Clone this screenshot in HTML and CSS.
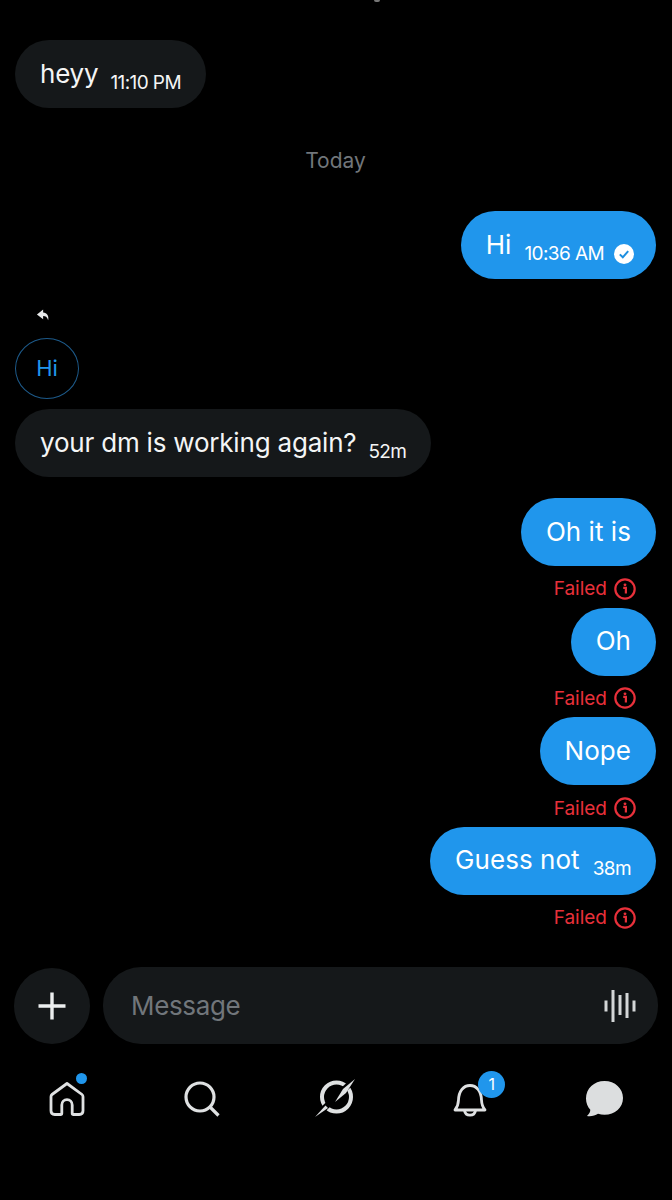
FILE: index.html
```html
<!DOCTYPE html>
<html lang="en">

<head>
  <meta charset="UTF-8" />
  <title>Messages</title>
  <link rel="stylesheet" href="styles.css">
</head>

<body>
  <div class="screen">
    <div class="clipped-top"></div>

    <main class="thread">
      <div class="bubble received first">
        <span class="text">heyy</span>
        <span class="time">11:10 PM</span>
      </div>

      <div class="day">Today</div>

      <div class="bubble sent">
        <span class="text">Hi</span>
        <span class="time">10:36 AM</span>
        <svg class="check" viewBox="0 0 20 20">
          <circle cx="10" cy="10" r="10" fill="#fff" />
          <path d="M5.800 10.400l3 2.900 5.400-6.200" fill="none" stroke="#1d8fe0" stroke-width="2" />
        </svg>
      </div>

      <div class="reply-block">
        <svg class="reply-icon" viewBox="0 0 16 16">
          <path d="M7.600 1.500L1 7l6.600 5V8.600c2.600 0 4.300 1 5.400 4.400.9-4.600-1-8-5.400-8.300z" fill="#e7e9ea" />
        </svg>
        <div class="quoted">Hi</div>
      </div>

      <div class="bubble received">
        <span class="text">your dm is working again?</span>
        <span class="time">52m</span>
      </div>

      <div class="bubble sent gap-lg">
        <span class="text">Oh it is</span>
      </div>
      <div class="failed">Failed
        <svg class="info" viewBox="0 0 20 20">
          <circle cx="10" cy="10" r="8.800" fill="none" stroke="#e8303a" stroke-width="2" />
          <circle cx="10" cy="6.200" r="1.300" fill="#e8303a" />
          <path d="M8.400 9h2.400v5.200" fill="none" stroke="#e8303a" stroke-width="2" />
        </svg>
      </div>

      <div class="bubble sent">
        <span class="text">Oh</span>
      </div>
      <div class="failed">Failed
        <svg class="info" viewBox="0 0 20 20">
          <circle cx="10" cy="10" r="8.800" fill="none" stroke="#e8303a" stroke-width="2" />
          <circle cx="10" cy="6.200" r="1.300" fill="#e8303a" />
          <path d="M8.400 9h2.400v5.200" fill="none" stroke="#e8303a" stroke-width="2" />
        </svg>
      </div>

      <div class="bubble sent">
        <span class="text">Nope</span>
      </div>
      <div class="failed">Failed
        <svg class="info" viewBox="0 0 20 20">
          <circle cx="10" cy="10" r="8.800" fill="none" stroke="#e8303a" stroke-width="2" />
          <circle cx="10" cy="6.200" r="1.300" fill="#e8303a" />
          <path d="M8.400 9h2.400v5.200" fill="none" stroke="#e8303a" stroke-width="2" />
        </svg>
      </div>

      <div class="bubble sent">
        <span class="text">Guess not</span>
        <span class="time">38m</span>
      </div>
      <div class="failed">Failed
        <svg class="info" viewBox="0 0 20 20">
          <circle cx="10" cy="10" r="8.800" fill="none" stroke="#e8303a" stroke-width="2" />
          <circle cx="10" cy="6.200" r="1.300" fill="#e8303a" />
          <path d="M8.400 9h2.400v5.200" fill="none" stroke="#e8303a" stroke-width="2" />
        </svg>
      </div>
    </main>

    <div class="composer">
      <div class="add-btn">
        <svg viewBox="0 0 30 30">
          <path d="M15 1.500v27M1.500 15h27" stroke="#eceeef" stroke-width="3.400" />
        </svg>
      </div>
      <div class="message-box">
        <span class="placeholder">Message</span>
        <svg class="voice" viewBox="0 0 32 32">
          <path d="M2 10.500v11M9 0v32M16 5v20M23 3v25M30 10.500v11" stroke="#d4d6d7" stroke-width="3" />
        </svg>
      </div>
    </div>

    <nav class="tabs">
      <div class="tab">
        <svg class="tab-icon" viewBox="0 0 36 36">
          <path d="M18 2.500L3 13.500c-.8.600-1 1.300-1 2.300v14c0 2.300 1.400 3.700 3.700 3.700h5.800c.8 0 1.300-.5 1.300-1.300V24c0-3 2.200-5.300 5.200-5.300s5.200 2.300 5.200 5.300v8.200c0 .8.500 1.300 1.300 1.300h5.800c2.300 0 3.700-1.400 3.700-3.700v-14c0-1-.2-1.700-1-2.300z" fill="none" stroke="#dfe1e2" stroke-width="2.800" stroke-linejoin="round" />
        </svg>
        <span class="home-dot"></span>
      </div>
      <div class="tab">
        <svg class="tab-icon" viewBox="0 0 36 36">
          <circle cx="16" cy="16" r="14" fill="none" stroke="#dfe1e2" stroke-width="3.200" />
          <path d="M26 26l8.500 8.500" stroke="#dfe1e2" stroke-width="3.200" />
        </svg>
      </div>
      <div class="tab">
        <svg class="tab-icon wide" viewBox="0 0 44 44">
          <circle cx="22.500" cy="21" r="14.500" fill="none" stroke="#dfe1e2" stroke-width="4" />
          <path d="M1 41L41 3" stroke="#000" stroke-width="6" />
          <path d="M41 3L32 17 21 26 29 13z" fill="#dfe1e2" />
          <path d="M1 41L11.500 29.500 14 32z" fill="#dfe1e2" />
        </svg>
      </div>
      <div class="tab">
        <svg class="tab-icon" viewBox="0 0 36 36">
          <path d="M3 29c2.500-3 3.300-5.500 3.500-10 .3-9 5-14.500 11.500-14.500S29.200 10 29.500 19c.2 4.500 1 7 3.500 10z" fill="none" stroke="#dfe1e2" stroke-width="2.800" stroke-linejoin="round" />
          <path d="M12.500 29.500c.5 3 2.700 4.700 5.500 4.700s5-1.700 5.500-4.700" fill="none" stroke="#dfe1e2" stroke-width="2.800" />
        </svg>
        <span class="badge">1</span>
      </div>
      <div class="tab">
        <svg class="tab-icon chat" viewBox="0 0 38 36">
          <path d="M19.500 0C9 0 1 7.500 1 17.500c0 4.500 1.700 8.300 4.300 11.300 0 2-.8 4-3.300 6.200 4 .6 8-.2 11-2.300 2 .7 4.300 1.100 6.500 1.100C30 33.800 38 26.500 38 17 38 7.500 30 0 19.500 0z" fill="#dcdedf" />
        </svg>
      </div>
    </nav>
  </div>
</body>

</html>
```

FILE: styles.css
```css
* {
  box-sizing: border-box;
}

body {
  margin: 0;
  background-color: #000;
  font-family: 'Inter', 'Liberation Sans', sans-serif;
  color: #e7e9ea;
}

.screen {
  width: 672px;
  height: 1200px;
  overflow: hidden;
  display: flex;
  flex-direction: column;
}

.clipped-top {
  width: 6px;
  height: 2px;
  margin-left: 374px;
  border-radius: 0 0 3px 3px;
  background-color: #777;
}

.thread {
  display: flex;
  flex-direction: column;
  align-items: flex-start;
  padding: 38px 16px 0 15px;
  height: 963px;
}

.bubble {
  display: flex;
  align-items: center;
  height: 68px;
  padding: 0 25px;
  border-radius: 34px;
  font-size: 26px;
  letter-spacing: -0.2px;
}

.bubble .text {
  position: relative;
  top: -1px;
}

.bubble .time {
  margin-left: 12px;
  position: relative;
  top: 8px;
  font-size: 19px;
  letter-spacing: -0.6px;
}

.received {
  background-color: #15181a;
  color: #f4f5f5;
}

.sent {
  align-self: flex-end;
  background-color: #2096ec;
  color: #fff;
  letter-spacing: 0.05px;
}

.sent .time {
  margin-left: 13px;
}

.gap-lg {
  margin-top: 21px;
}

.day {
  align-self: center;
  margin: 40px 0 37px;
  font-size: 21px;
  line-height: 26px;
  color: #71767b;
}

.check {
  width: 20px;
  height: 20px;
  margin-left: 10px;
  margin-right: -3px;
  position: relative;
  top: 9px;
}

.reply-block {
  margin-top: 29px;
  margin-bottom: 10px;
}

.reply-icon {
  display: block;
  width: 15px;
  height: 15px;
  margin-left: 21px;
  margin-bottom: 15px;
}

.quoted {
  display: flex;
  align-items: center;
  justify-content: center;
  width: 64px;
  height: 61px;
  padding-bottom: 1px;
  border: 1px solid #1d5a8a;
  border-radius: 50%;
  color: #2096ec;
  font-size: 22px;
}

.failed {
  align-self: flex-end;
  display: flex;
  align-items: center;
  height: 41.670px;
  padding-top: 4px;
  padding-right: 20px;
  gap: 7px;
  font-size: 19px;
  color: #e8303a;
}

.info {
  width: 22px;
  height: 22px;
}

.composer {
  display: flex;
  align-items: center;
  gap: 13px;
  padding: 2px 14px 0;
}

.add-btn {
  display: flex;
  align-items: center;
  justify-content: center;
  flex: 0 0 76px;
  height: 76px;
  border-radius: 50%;
  background-color: #15181a;
}

.add-btn svg {
  width: 30px;
  height: 30px;
}

.message-box {
  flex: 1;
  display: flex;
  align-items: center;
  justify-content: space-between;
  height: 77px;
  padding: 0 22px 0 28px;
  border-radius: 38px;
  background-color: #15181a;
}

.placeholder {
  font-size: 26px;
  letter-spacing: -0.35px;
  color: #71767b;
}

.voice {
  width: 32px;
  height: 32px;
}

.tabs {
  display: flex;
  justify-content: space-between;
  padding: 37px 0 0;
}

.tab {
  position: relative;
  display: flex;
  justify-content: center;
  width: 134.400px;
}

.tab-icon {
  width: 36px;
  height: 36px;
}

.tab-icon.wide {
  width: 44px;
  height: 44px;
  margin-top: -5px;
}

.tab-icon.chat {
  width: 38px;
  margin-left: -2px;
}

.home-dot {
  position: absolute;
  top: -8px;
  left: 76px;
  width: 11px;
  height: 11px;
  border-radius: 50%;
  background-color: #2096ec;
}

.badge {
  position: absolute;
  top: -10px;
  left: 75px;
  width: 27px;
  height: 27px;
  border-radius: 50%;
  background-color: #2096ec;
  color: #fff;
  font-size: 16px;
  line-height: 27px;
  text-align: center;
}
```
